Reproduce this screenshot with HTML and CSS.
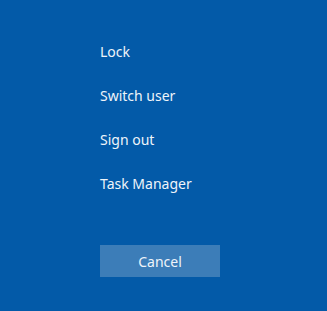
FILE: index.html
```html
<!DOCTYPE html>
<html>
<head>
<meta charset="utf-8">
<link rel="stylesheet" href="styles.css">
</head>
<body>
<div class="screen">
  <ul class="menu">
    <li class="item">Lock</li>
    <li class="item">Switch user</li>
    <li class="item">Sign out</li>
    <li class="item">Task Manager</li>
  </ul>
  <button class="cancel">Cancel</button>
</div>
</body>
</html>
```
FILE: styles.css
```css
html, body {
  margin: 0;
  padding: 0;
  background: #035aa8;
}
.screen {
  width: 327px;
  height: 311px;
  box-sizing: border-box;
  padding: 41px 0 0 100px;
  font-family: "Noto Sans", "Open Sans", sans-serif;
  color: #eef4fa;
  overflow: hidden;
}
.menu {
  list-style: none;
  margin: 0;
  padding: 0;
  display: flex;
  flex-direction: column;
  gap: 22px;
}
.item {
  font-size: 14px;
  line-height: 22px;
  height: 22px;
}
.cancel {
  margin-top: 50px;
  width: 120px;
  height: 32px;
  border: none;
  background: #3c7db8;
  color: #eef4fa;
  font-family: "Noto Sans", "Open Sans", sans-serif;
  font-size: 14px;
  padding: 0;
  display: block;
}
```
